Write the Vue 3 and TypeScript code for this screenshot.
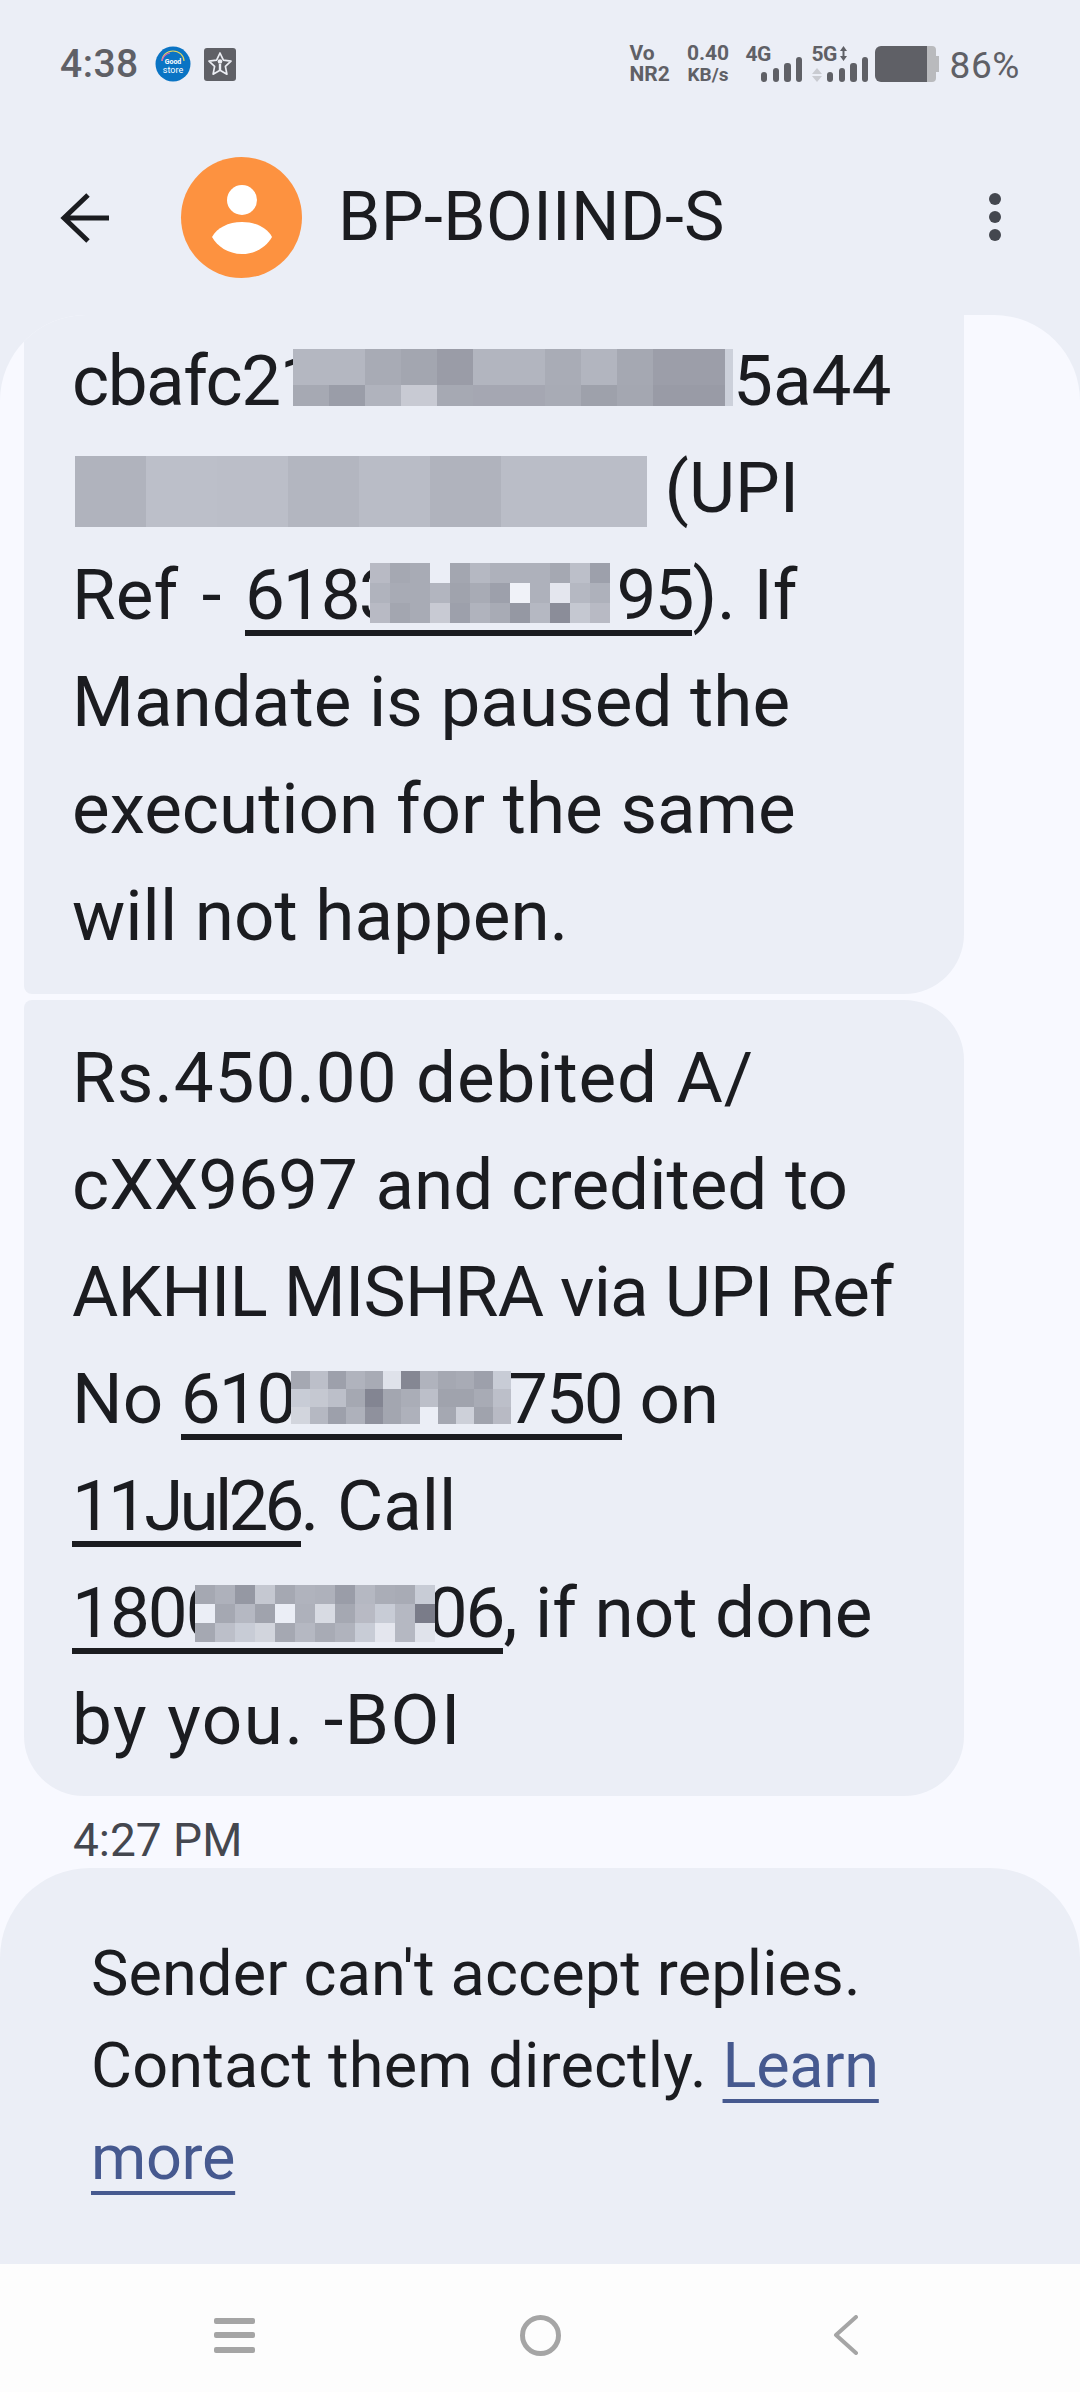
<script setup lang="ts">
interface Mosaic {
  cols: number[]
  rows: number[]
  shift: number
  pull: number
  push: number
  colors: string[][]
}

const uniform = (n: number, w: number) => Array.from({ length: n }, () => w)

const hash1: Mosaic = {
  cols: [...uniform(12, 36), 8],
  rows: [36, 21],
  shift: 1,
  pull: -25,
  push: 0,
  colors: [
    ['b4b7c1', 'b4b7c1', 'a8abb5', 'a3a6b0', '9a9ca7', 'b2b5bf', 'b2b5bf', 'a9acb6', 'b2b5bf', 'a5a8b2', '9c9ea9', '9c9ea9', 'ccd0da'],
    ['a6a9b3', '9a9da8', 'b0b3bd', 'c8cad3', 'a6a9b3', 'a5a7b2', 'a5a7b2', 'a8abb5', '9ea1ab', 'a4a7b1', '999ba6', '999ba6', 'ccd0da'],
  ],
}

const hash2: Mosaic = {
  cols: [71, 71, 71, 71, 71, 71, 146],
  rows: [71],
  shift: 15,
  pull: 3,
  push: 0,
  colors: [['b0b3bd', 'bcbfc9', 'bbbec8', 'b3b6c0', 'b9bcc6', 'b0b3bd', 'babdc7']],
}

const upiRef: Mosaic = {
  cols: uniform(12, 20),
  rows: [20, 20, 20],
  shift: 4,
  pull: -27,
  push: 7,
  colors: [
    ['b8bac4', 'a5a8b2', 'a8abb5', 'ebeef6', 'a3a6b0', 'b5b8c2', 'aeb1bb', 'aeb1bb', 'aeb1bb', 'a5a8b2', 'bcbfc9', '9da0ab'],
    ['b0b3bd', 'a8abb5', 'a8abb5', 'b2b5bf', 'a0a3ad', 'a8abb5', '9da0ab', 'f0f2f8', 'aeb1bb', 'e4e6ee', 'b5b8c2', 'aeb1bb'],
    ['b8bac4', 'a3a6b0', 'a8abb5', 'c8cad3', '9da0ab', 'b0b3bd', 'a8abb5', '9598a3', 'b5b8c2', '8b8d99', 'c5c8d1', 'b8bac4'],
  ],
}

const upiNo: Mosaic = {
  cols: uniform(12, 18.3),
  rows: [18, 18, 17],
  shift: 1,
  pull: -3,
  push: -3,
  colors: [
    ['a5a8b2', 'bcbfc9', '9da0ab', 'b0b3bd', 'a8abb5', 'dfe2ea', '858793', 'b0b3bd', 'a5a8b2', 'a8abb5', '9da0ab', 'c8ccd6'],
    ['c8ccd6', 'c5c8d1', 'bcbfc9', 'a5a8b2', '838592', 'a3a6b0', 'aaadb7', 'bcbfc9', 'a0a3ad', 'a0a3ad', 'a8abb5', 'bcbfc9'],
    ['d2d5dd', 'b5b8c2', '9da0ab', 'aeb1bb', '8f919d', 'a3a6b0', 'aeb1bb', 'ebeef6', 'a5a8b2', 'cdd0d9', 'a0a3ad', 'b8bac4'],
  ],
}

const phone: Mosaic = {
  cols: uniform(12, 20),
  rows: [19, 19, 19],
  shift: 5,
  pull: -29,
  push: -7,
  colors: [
    ['a5a8b2', 'aeb1bb', '9598a3', 'c5c8d1', 'a5a8b2', 'b0b3bd', 'aeb1bb', '9a9da8', 'b5b8c2', 'aaadb7', 'a8abb5', 'c8ccd6'],
    ['ebeef6', 'a5a8b2', 'b5b8c2', 'a0a3ad', 'ebeef6', 'aeb1bb', 'd8dbe3', 'a5a8b2', 'b8bac4', 'c8ccd6', 'b5b8c2', '7a7c89'],
    ['a5a8b2', 'bcbfc9', 'c8ccd6', 'd2d5dd', 'a5a8b2', 'b5b8c2', 'a8abb5', 'b0b3bd', 'c8ccd6', 'e4e6ee', 'b5b8c2', 'e0e3eb'],
  ],
}

const boxStyle = (m: Mosaic) => ({
  verticalAlign: `${-m.shift}px`,
  marginLeft: `${m.pull}px`,
  marginRight: `${m.push}px`,
})

const gridStyle = (m: Mosaic) => ({
  gridTemplateColumns: m.cols.map((c) => `${c}px`).join(' '),
  gridTemplateRows: m.rows.map((r) => `${r}px`).join(' '),
})

const cells = (m: Mosaic) => m.colors.flat().map((c) => `#${c}`)
</script>

<template>
  <div class="page">
    <header class="top">
      <div class="status">
        <span class="clock">4:38</span>
        <svg class="note" width="36" height="36" viewBox="0 0 36 36">
          <circle cx="18" cy="18" r="17.5" fill="#0a74c4" />
          <path d="M7 15a11 10 0 0 1 22 0" fill="none" stroke="#e5d65c" stroke-width="1.2" />
          <path d="M7 15a11 10 0 0 1 8-8" fill="none" stroke="#d65cc0" stroke-width="1.2" />
          <text x="18" y="18" text-anchor="middle" class="note-a">Good</text>
          <text x="18" y="27" text-anchor="middle" class="note-b">store</text>
        </svg>
        <svg class="note2" width="32" height="33" viewBox="0 0 32 33">
          <rect width="32" height="33" rx="3" fill="#5f6066" />
          <path d="M16 5l3.4 7.2 7.6.9-5.6 5.3 1.5 7.8L16 22.300l-6.900 3.900 1.500-7.800L5 13.100l7.600-.9z" fill="none" stroke="#eceef4" stroke-width="1.700" stroke-linejoin="round" />
          <circle cx="16" cy="13.500" r="2.300" fill="#eceef4" />
          <rect x="14.800" y="16" width="2.400" height="6" fill="#eceef4" />
        </svg>
        <span class="spacer"></span>
        <span class="stack vo"><b>Vo</b><b>NR2</b></span>
        <span class="stack speed"><b>0.40</b><b class="unit">KB/s</b></span>
        <span class="sig sig4">
          <b>4G</b>
          <svg width="41" height="25" viewBox="0 0 41 25" fill="#5f6066">
            <rect y="15" width="6" height="10" rx="3" />
            <rect x="12" y="11" width="6" height="14" rx="3" />
            <rect x="23" y="6" width="7" height="19" rx="3" />
            <rect x="35" y="0" width="6" height="25" rx="3" />
          </svg>
        </span>
        <span class="sig sig5">
          <b>5G</b>
          <svg class="updown" width="7" height="15" viewBox="0 0 7 15" fill="#5f6066">
            <path d="M3.500 0L7 5H0zM3.500 15L0 10h7zM2.500 5h2v5h-2z" />
          </svg>
          <svg class="arrows" width="10" height="14" viewBox="0 0 10 14" fill="#c9cbd1">
            <path d="M5 0l5 6H0zM5 14L0 8h10z" />
          </svg>
          <svg class="bars" width="41" height="25" viewBox="0 0 41 25" fill="#5f6066">
            <rect y="15" width="6" height="10" rx="3" />
            <rect x="12" y="11" width="6" height="14" rx="3" />
            <rect x="23" y="6" width="7" height="19" rx="3" />
            <rect x="35" y="0" width="6" height="25" rx="3" />
          </svg>
        </span>
        <svg class="battery" width="64" height="36" viewBox="0 0 64 36">
          <path d="M52 0h5a4 4 0 0 1 4 4v6h3v16h-3v6a4 4 0 0 1-4 4h-5z" fill="#b9babd" />
          <path d="M6 0h46v36H6a6 6 0 0 1-6-6V6a6 6 0 0 1 6-6z" fill="#5f6066" />
        </svg>
        <span class="pct">86%</span>
      </div>

      <div class="appbar">
        <svg class="back" width="50" height="50" viewBox="0 0 50 50" fill="none" stroke="#1b1c20" stroke-width="5">
          <path d="M49 25H4M28 2L4 25l24 23" />
        </svg>
        <div class="avatar">
          <svg width="60" height="69" viewBox="0 0 60 69" fill="#fff">
            <circle cx="30" cy="15" r="15" />
            <path d="M0 52c5-9 16-15 30-15s25 6 30 15c-5 9-16 17-30 17S5 61 0 52z" />
          </svg>
        </div>
        <h1 class="title">BP-BOIIND-S</h1>
        <span class="dots"><i></i><i></i><i></i></span>
      </div>
    </header>

    <main class="surface">
      <div class="thread">
        <div class="bubble first">
          <span class="squeeze">cbafc21</span><span class="mosaic" :style="boxStyle(hash1)"><span class="grid" :style="gridStyle(hash1)"><i v-for="(c, i) in cells(hash1)" :key="i" :style="{ background: c }"></i></span></span>5a44<br />
          <span class="mosaic" :style="boxStyle(hash2)"><span class="grid" :style="gridStyle(hash2)"><i v-for="(c, i) in cells(hash2)" :key="i" :style="{ background: c }"></i></span></span> (UPI<br />
          <span class="spread">Ref - </span><span class="ln">6183<span class="mosaic" :style="boxStyle(upiRef)"><span class="grid" :style="gridStyle(upiRef)"><i v-for="(c, i) in cells(upiRef)" :key="i" :style="{ background: c }"></i></span></span>95</span>). If<br />
          Mandate is paused the<br />
          execution for the same<br />
          will not happen.
        </div>
        <div class="bubble second">
          <span class="wide">Rs.450.00 debited A/</span><br />
          cXX9697 and credited to<br />
          <span class="tight">AKHIL MISHRA via UPI Ref</span><br />
          No <span class="ln">610<span class="mosaic" :style="boxStyle(upiNo)"><span class="grid" :style="gridStyle(upiNo)"><i v-for="(c, i) in cells(upiNo)" :key="i" :style="{ background: c }"></i></span></span>750</span> on<br />
          <span class="ln narrow">11Jul26</span>. Call<br />
          <span class="ln">1800<span class="mosaic" :style="boxStyle(phone)"><span class="grid" :style="gridStyle(phone)"><i v-for="(c, i) in cells(phone)" :key="i" :style="{ background: c }"></i></span></span>06</span>, if not done<br />
          <span class="wider">by you. -BOI</span>
        </div>
        <div class="stamp">4:27 PM</div>
      </div>

      <footer class="notice">
        Sender can't accept replies.<br />
        Contact them directly. <a class="learn">Learn<br />more</a>
      </footer>
    </main>

    <nav class="nav">
      <svg width="41" height="35" viewBox="0 0 41 35" fill="#a5a5a5">
        <rect width="41" height="6" rx="2" />
        <rect y="14" width="41" height="6" rx="2" />
        <rect y="29" width="41" height="6" rx="2" />
      </svg>
      <svg width="41" height="41" viewBox="0 0 41 41" fill="none" stroke="#a5a5a5" stroke-width="5">
        <circle cx="20.500" cy="20.500" r="18" />
      </svg>
      <svg width="26" height="40" viewBox="0 0 26 40" fill="none" stroke="#a5a5a5" stroke-width="4" stroke-linecap="round" stroke-linejoin="round">
        <path d="M23 2L3 20l20 18" />
      </svg>
    </nav>
  </div>
</template>

<style>
html,
body {
  margin: 0;
  background: #fff;
}
</style>

<style scoped>
.page {
  width: 1080px;
  height: 2392px;
  display: flex;
  flex-direction: column;
  overflow: hidden;
  background: #ebeef6;
  color: #1b1c20;
  font-family: Roboto, 'Noto Sans', sans-serif;
}

.top {
  height: 315px;
  flex: none;
}

.status {
  height: 128px;
  display: flex;
  align-items: center;
  padding: 0 60px 0 60px;
  color: #5f6066;
  box-sizing: border-box;
}

.clock {
  font-size: 39px;
  font-weight: 500;
  letter-spacing: 0.5px;
}

.note {
  margin-left: 16px;
}

.note-a,
.note-b {
  font-family: Roboto, sans-serif;
  fill: #fff;
}

.note-a {
  font-size: 7px;
  font-weight: 700;
}

.note-b {
  font-size: 9px;
}

.note2 {
  margin-left: 13px;
}

.spacer {
  flex: 1;
}

.stack {
  display: flex;
  flex-direction: column;
  font-size: 21px;
  line-height: 21px;
  font-weight: 700;
}

.stack b {
  font-weight: 700;
}

.vo {
  width: 49px;
}

.speed {
  width: 59px;
  font-size: 21px;
  align-items: center;
}

.speed .unit {
  font-size: 19px;
}

.sig {
  position: relative;
  width: 56px;
  height: 36px;
  font-size: 21px;
  line-height: 20px;
  letter-spacing: -0.5px;
}

.sig b {
  position: absolute;
  left: 0;
  top: -2px;
}

.sig svg {
  position: absolute;
  right: 0;
  bottom: 0;
}

.sig4 {
  width: 56px;
  margin-left: 8px;
  margin-right: 10px;
}

.sig5 {
  width: 56px;
  margin-right: 7px;
}

.sig5 .updown {
  left: 28px;
  top: 0;
  right: auto;
  bottom: auto;
}

.sig5 .arrows {
  left: 0;
  right: auto;
  bottom: 0;
}

.battery {
  flex: none;
}

.pct {
  margin-left: 11px;
  font-size: 37px;
  letter-spacing: 0.6px;
  position: relative;
  top: 1px;
}

.appbar {
  height: 187px;
  box-sizing: border-box;
  padding: 29px 60px 0 60px;
  display: flex;
  align-items: flex-start;
}

.back {
  margin-top: 36px;
  flex: none;
}

.avatar {
  width: 121px;
  height: 121px;
  margin-left: 71px;
  border-radius: 50%;
  background: #fd9240;
  display: flex;
  align-items: center;
  justify-content: center;
  flex: none;
}

.avatar svg {
  margin-top: 4px;
}

.title {
  margin: 0 0 0 36px;
  font-size: 68px;
  line-height: 121px;
  font-weight: 400;
  letter-spacing: 0.4px;
  white-space: nowrap;
}

.dots {
  margin-left: auto;
  margin-right: 19px;
  margin-top: 36px;
  display: flex;
  flex-direction: column;
  gap: 6px;
}

.dots i {
  width: 12px;
  height: 12px;
  border-radius: 50%;
  background: #44474f;
}

.surface {
  flex: 1;
  min-height: 0;
  display: flex;
  flex-direction: column;
  background: #f8f9ff;
  border-radius: 86px 86px 0 0;
  overflow: hidden;
}

.thread {
  flex: 1;
  padding: 0 116px 0 24px;
}

.bubble {
  background: #ebeef6;
  padding: 0 48px;
  font-size: 71px;
  line-height: 107px;
  white-space: nowrap;
}

.first {
  padding-top: 12px;
  height: 679px;
  box-sizing: border-box;
  border-radius: 0 0 60px 8px;
}

.second {
  margin-top: 6px;
  height: 796px;
  box-sizing: border-box;
  padding-top: 24px;
  border-radius: 8px 60px 60px 60px;
}

.squeeze {
  letter-spacing: -1.5px;
}

.spread {
  word-spacing: 6px;
}

.wide {
  letter-spacing: 0.9px;
}

.wider {
  letter-spacing: 1.5px;
}

.tight {
  letter-spacing: -0.8px;
}

.mosaic {
  display: inline-block;
  overflow: hidden;
  position: relative;
}

.grid {
  display: grid;
}

.grid i {
  display: block;
}

.ln {
  letter-spacing: -2px;
  background: linear-gradient(#1b1c20, #1b1c20) 0 100% / 100% 6px no-repeat;
}

.ln.narrow {
  letter-spacing: -3.8px;
}

.stamp {
  margin-top: 19px;
  padding-left: 49px;
  font-size: 46px;
  line-height: 50px;
  color: #44474f;
}

.notice {
  flex: none;
  height: 396px;
  box-sizing: border-box;
  padding: 60px 92px 0 91px;
  background: #ebeef6;
  border-radius: 90px 90px 0 0;
  font-size: 63px;
  line-height: 92px;
  letter-spacing: 0.15px;
  white-space: nowrap;
}

.learn {
  color: #46598f;
  letter-spacing: -0.3px;
  text-decoration: underline;
  text-decoration-thickness: 4px;
  text-underline-offset: 12px;
}

.nav {
  height: 128px;
  flex: none;
  box-sizing: border-box;
  padding-top: 14px;
  padding-left: 214px;
  background: #fdfdfd;
  display: flex;
  align-items: center;
}

.nav svg:nth-child(2) {
  margin-left: 265px;
}

.nav svg:nth-child(3) {
  margin-left: 272px;
}
</style>
